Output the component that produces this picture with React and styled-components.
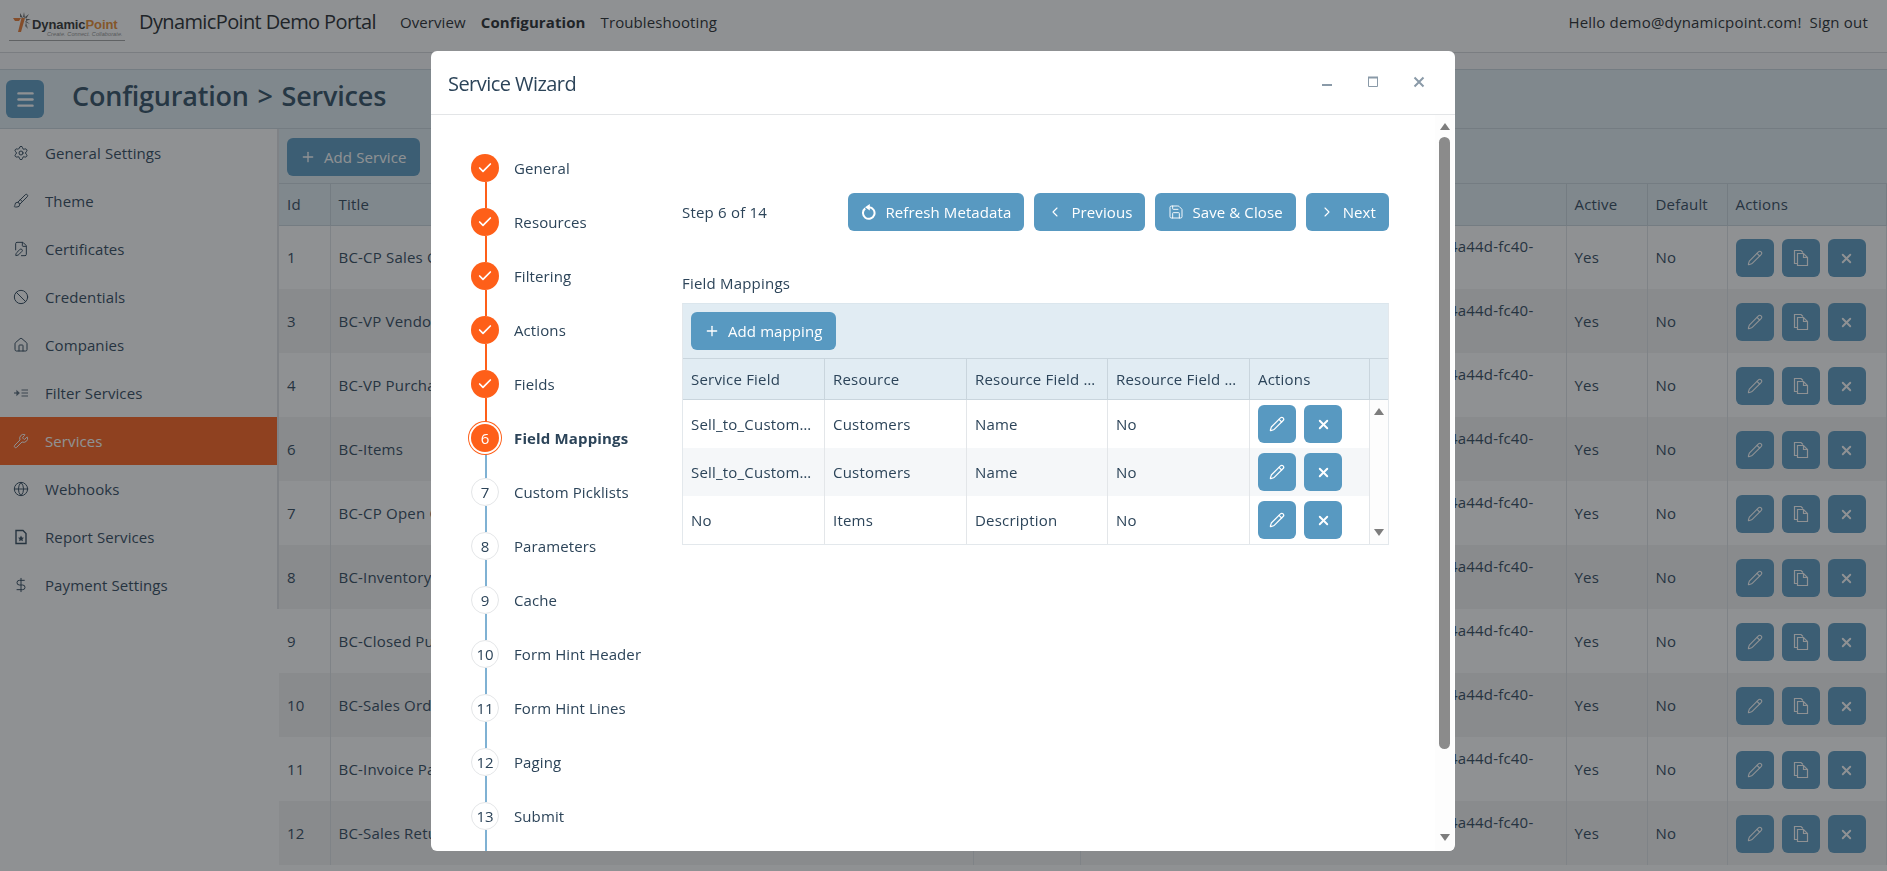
import React from 'react';
import styled, { createGlobalStyle } from 'styled-components';
import { Settings, Brush, FilePen, Ban, House, Wrench, Globe, DollarSign, Menu, Plus, Pencil, X, Check, ChevronLeft, ChevronRight, Save } from 'lucide-react';

const FONT = `"Open Sans", "Noto Sans", "Liberation Sans", sans-serif`;

const Global = createGlobalStyle`
  html, body { margin: 0; padding: 0; height: 100%; overflow: hidden; background: #fff; }
  * { box-sizing: border-box; }
  body { font-family: ${FONT}; font-size: 15px; color: #2c4459; letter-spacing: 0.2px; }
`;

const Page = styled.div`
  height: 871px;
  display: flex;
  flex-direction: column;
  overflow: hidden;
`;
const TopBar = styled.header`
  height: 53px;
  flex: none;
  display: flex;
  align-items: center;
  padding: 0 19px 9px 9px;
  border-bottom: 1px solid #d5d7da;
  color: #212529;
`;
const Logo = styled.div`
  width: 116px;
  flex: none;
  height: 29px;
  border-bottom: 1px solid #a0a0a0;
  display: flex;
  align-items: flex-start;
  margin-top: 9px;
  padding-left: 3px;
  overflow: hidden;
  svg { flex: none; }
`;
const LogoWords = styled.div`
  display: flex;
  flex-direction: column;
  padding-top: 6px;
`;
const LogoName = styled.span`
  font: 700 13px/13px "Liberation Sans", sans-serif;
  letter-spacing: -0.1px;
  color: #2d2d2d;
  white-space: nowrap;
`;
const LogoAccent = styled.span`
  color: #e8892c;
`;
const LogoTag = styled.span`
  font: italic 400 5.5px/7px "Liberation Sans", sans-serif;
  letter-spacing: 0.1px;
  color: #8c8c8c;
  padding-left: 15px;
  white-space: nowrap;
`;
const Brand = styled.span`
  font-size: 20px;
  letter-spacing: -0.62px;
  margin-left: 14px;
  white-space: nowrap;
`;
const Nav = styled.nav`
  display: flex;
  gap: 15px;
  margin-left: 24px;
`;
const NavLink = styled.a`
  font-weight: ${p => (p.$active ? 700 : 400)};
  letter-spacing: 0.1px;
  white-space: nowrap;
`;
const Greeting = styled.div`
  margin-left: auto;
  display: flex;
  gap: 8px;
  white-space: nowrap;
`;
const Band = styled.div`
  height: 17px;
  flex: none;
  background: #f8f9fa;
  border-bottom: 1px solid #c9d5dd;
`;
const TitleBar = styled.div`
  height: 59px;
  flex: none;
  display: flex;
  align-items: center;
  padding-left: 6px;
  background: #e1ecf3;
  border-bottom: 1px solid #c9d5dd;
`;
const Hamburger = styled.button`
  width: 38px;
  height: 38px;
  border: 0;
  border-radius: 6px;
  background: #5899c1;
  color: #fff;
  display: flex;
  align-items: center;
  justify-content: center;
  padding: 0;
`;
const PageTitle = styled.h1`
  margin: 0 0 7px 28px;
  font-size: 27px;
  font-weight: 600;
  letter-spacing: -0.2px;
  word-spacing: 2px;
  color: #2c4a60;
  white-space: pre;
`;
const Body = styled.div`
  flex: 1;
  display: flex;
  min-height: 0;
`;
const Sidebar = styled.aside`
  width: 279px;
  flex: none;
  height: 480px;
  border-right: 2px solid #dfe1e4;
`;
const SideItem = styled.div`
  height: 48px;
  display: flex;
  align-items: center;
  gap: 16px;
  padding-left: 13px;
  letter-spacing: 0.1px;
  color: ${p => (p.$active ? '#fff' : '#2c4459')};
  background: ${p => (p.$active ? '#fe5f19' : 'transparent')};
`;
const Content = styled.main`
  flex: 1;
  min-width: 0;
`;
const Toolbar = styled.div`
  height: 55px;
  padding: 9px 8px 0;
  background: #e1ecf3;
  border-bottom: 1px solid #c9d5dd;
`;
const Btn = styled.button`
  height: 38px;
  display: inline-flex;
  align-items: center;
  gap: 8px;
  padding: 0 13px;
  border: 0;
  border-radius: 6px;
  background: #5899c1;
  color: #fff;
  font-family: inherit;
  font-size: 15px;
  letter-spacing: 0.1px;
  white-space: nowrap;
`;
const IconBtn = styled(Btn)`
  width: 38px;
  padding: 0;
  justify-content: center;
`;
const Grid = styled.table`
  width: 100%;
  table-layout: fixed;
  border-collapse: collapse;
`;
const Th = styled.th`
  height: 41px;
  padding: 0 8px;
  text-align: left;
  font-weight: 400;
  background: #e1ecf3;
  border-right: 1px solid #c9d5dd;
  border-bottom: 1px solid #c9d5dd;
  white-space: nowrap;
  overflow: hidden;
  text-overflow: ellipsis;
`;
const Tr = styled.tr`
  background: ${p => (p.$alt ? '#f2f2f3' : '#fff')};
`;
const Td = styled.td`
  height: 64px;
  padding: 0 8px;
  border-right: 1px solid #dfe3e7;
  line-height: 21px;
  white-space: nowrap;
`;
const ActionRow = styled.div`
  display: flex;
  gap: 8px;
  padding-top: 2px;
`;

const Overlay = styled.div`
  position: fixed;
  inset: 0;
  background: rgba(32, 35, 39, 0.5);
`;
const Modal = styled.section`
  position: fixed;
  left: 431px;
  top: 51px;
  width: 1024px;
  height: 800px;
  background: #fff;
  border-radius: 6px;
  display: flex;
  flex-direction: column;
  overflow: hidden;
`;
const ModalHead = styled.div`
  height: 64px;
  flex: none;
  display: flex;
  align-items: center;
  padding: 0 29px 0 17px;
  border-bottom: 1px solid #e3e5e7;
`;
const ModalTitle = styled.h2`
  margin: 2px 0 0;
  font-size: 20px;
  font-weight: 400;
  letter-spacing: -0.55px;
  flex: 1;
`;
const WinControls = styled.div`
  display: flex;
  gap: 32px;
  margin-top: -1px;
  color: #8a9aa8;
`;
const ModalBody = styled.div`
  flex: 1;
  min-height: 0;
  display: flex;
  overflow: hidden;
`;
const Stepper = styled.ol`
  list-style: none;
  margin: 0;
  padding: 39px 0 0 40px;
  width: 251px;
  flex: none;
`;
const Step = styled.li`
  display: grid;
  grid-template-columns: 28px 1fr;
  column-gap: 15px;
`;
const Rail = styled.div`
  display: flex;
  flex-direction: column;
`;
const Dot = styled.div`
  width: 28px;
  height: 28px;
  border-radius: 50%;
  display: flex;
  align-items: center;
  justify-content: center;
  flex: none;
  position: relative;
  letter-spacing: 0;
  background: ${p => (p.$state === 'todo' ? '#fff' : '#fe5f19')};
  color: ${p => (p.$state === 'todo' ? '#2c4459' : '#fff')};
  border: ${p => (p.$state === 'todo' ? '1px solid #e4e6e8' : '0')};
  box-shadow: ${p => (p.$state === 'current' ? '0 0 0 2px #fff, 0 0 0 3px #fe5f19' : 'none')};
  z-index: 1;
`;
const Connector = styled.div`
  width: 2px;
  height: 26px;
  margin-left: 14px;
  background: ${p => (p.$done ? '#fe5f19' : '#7fb1d3')};
`;
const StepLabel = styled.div`
  height: 28px;
  line-height: 28px;
  white-space: nowrap;
  font-weight: ${p => (p.$current ? 700 : 400)};
  letter-spacing: ${p => (p.$current ? '0.15px' : '0.1px')};
`;
const Main = styled.div`
  width: 707px;
  flex: none;
  padding-top: 78px;
`;
const ActionsBar = styled.div`
  display: flex;
  align-items: center;
  gap: 10px;
`;
const StepCount = styled.div`
  flex: 1;
`;
const SectionLabel = styled.div`
  margin-top: 42px;
  height: 20px;
  line-height: 21px;
`;
const MapGrid = styled.div`
  margin-top: 10px;
  border: 1px solid #e3e8ec;
  border-top-color: #dbe6ed;
`;
const MapToolbar = styled.div`
  height: 55px;
  padding: 8px;
  background: #e1ecf3;
  border-bottom: 1px solid #c9d5dd;
`;
const MapRowHead = styled.div`
  display: grid;
  grid-template-columns: 142px 142px 141px 142px 120px 1fr;
  height: 41px;
  background: #e1ecf3;
  border-bottom: 1px solid #c9d5dd;
`;
const MapTh = styled.div`
  padding: 0 8px;
  line-height: 41px;
  border-right: ${p => (p.$last ? '0' : '1px solid #c9d5dd')};
  white-space: nowrap;
  overflow: hidden;
  text-overflow: ellipsis;
`;
const MapBody = styled.div`
  display: flex;
`;
const MapRows = styled.div`
  width: 687px;
  flex: none;
`;
const MapRow = styled.div`
  display: grid;
  grid-template-columns: 142px 142px 141px 142px 120px;
  height: 48px;
  background: ${p => (p.$alt ? '#f5f7f9' : '#fff')};
`;
const MapTd = styled.div`
  padding: 0 8px;
  display: flex;
  align-items: center;
  gap: 8px;
  border-right: 1px solid #e3e6e9;
  white-space: nowrap;
  overflow: hidden;
`;
const MapTdText = styled.span`
  overflow: hidden;
  text-overflow: ellipsis;
`;
const MiniTrack = styled.div`
  flex: 1;
  background: #fdfdfd;
  display: flex;
  flex-direction: column;
  justify-content: space-between;
  align-items: center;
  padding: 8px 0;
`;
const Track = styled.div`
  width: 19px;
  margin-left: 46px;
  flex: none;
  background: #fdfdfd;
  display: flex;
  flex-direction: column;
  align-items: center;
  padding: 8px 0 10px;
`;
const Thumb = styled.div`
  width: 11px;
  height: 612px;
  margin-top: 7px;
  border-radius: 6px;
  background: #8b8b8b;
`;
const Spacer = styled.div`
  flex: 1;
`;
const Arrow = styled.span`
  width: 0;
  height: 0;
  border-left: 5px solid transparent;
  border-right: 5px solid transparent;
  ${p => (p.$down ? 'border-top: 7px solid #7d7d7d;' : 'border-bottom: 7px solid #7d7d7d;')}
`;

const Icon = { size: 16, strokeWidth: 1.5 };

const FilterIcon = () => (
  <svg width="16" height="16" viewBox="0 0 16 16" fill="none" stroke="currentColor" strokeWidth="1.2" opacity="0.8">
    <path d="M1 8h4" /><path d="M4 6.2L6 8l-2 1.8z" fill="currentColor" />
    <path d="M8.5 5H15M8.5 8H15M8.5 11H15" />
  </svg>
);
const ReportIcon = () => (
  <svg width="16" height="16" viewBox="0 0 16 16" fill="none" stroke="currentColor" strokeWidth="1.4">
    <path d="M3 1.5h7l3 3v10H3z" />
    <path d="M8 6.5l1 2 2 .2-1.5 1.4.4 2.1L8 11.2l-1.9 1 .4-2.1L5 8.7l2-.2z" fill="currentColor" stroke="none" />
  </svg>
);
const CopyIcon = () => (
  <svg width="16" height="18" viewBox="0 0 16 18" fill="none" stroke="currentColor" strokeWidth="1.2">
    <path d="M4.5 14.5H1.5V1.5H8L10 3.5" />
    <path d="M4.5 4.5H10.5L14.5 8.5V16.5H4.5Z" />
    <path d="M10.5 4.5V8.5H14.5" />
  </svg>
);
const ResetIcon = () => (
  <svg width="16" height="16" viewBox="0 0 16 16" fill="none">
    <path d="M4.2 4.4A5.8 5.8 0 1 0 8 3.2" stroke="currentColor" strokeWidth="2" />
    <path d="M8.8 0L4 3.2L8.8 6.4Z" fill="currentColor" />
  </svg>
);
const MinIcon = () => (
  <svg width="14" height="14" viewBox="0 0 14 14"><path d="M2 10h10" stroke="currentColor" strokeWidth="2" /></svg>
);
const MaxIcon = () => (
  <svg width="14" height="14" viewBox="0 0 14 14" fill="none" stroke="currentColor">
    <path d="M2.5 2.5h9v9h-9z" /><path d="M2 2.5h10" strokeWidth="2" />
  </svg>
);
const CloseIcon = () => (
  <svg width="14" height="14" viewBox="0 0 14 14" fill="none" stroke="currentColor" strokeWidth="2"><path d="M2.5 2.5l9 9M11.5 2.5l-9 9" /></svg>
);
const LogoMark = () => (
  <svg width="20" height="24" viewBox="0 0 20 24" fill="none">
    <path d="M1 6h8l-2 3H3z" fill="#e8772c" />
    <path d="M9.5 6h3.5l-4 14H6z" fill="#e8772c" />
    <path d="M8 1l3 5-3-1zM12 0l1 6-2-1zM17 2l-3 5-1-2zM19 7l-5 2 0-2zM18 12l-5-2 1-1z" fill="#666" />
    <path d="M14 10l2 7-3-3z" fill="#888" />
  </svg>
);

const sidebar = [
  ['General Settings', <Settings {...Icon} />],
  ['Theme', <Brush {...Icon} />],
  ['Certificates', <FilePen {...Icon} />],
  ['Credentials', <Ban {...Icon} />],
  ['Companies', <House {...Icon} />],
  ['Filter Services', <FilterIcon />],
  ['Services', <Wrench {...Icon} />, true],
  ['Webhooks', <Globe {...Icon} />],
  ['Report Services', <ReportIcon />],
  ['Payment Settings', <DollarSign {...Icon} />],
];

const services = [
  ['1', 'BC-CP Sales Orders'],
  ['3', 'BC-VP Vendors'],
  ['4', 'BC-VP Purchase Orders'],
  ['6', 'BC-Items'],
  ['7', 'BC-CP Open Orders'],
  ['8', 'BC-Inventory'],
  ['9', 'BC-Closed Purchase Orders'],
  ['10', 'BC-Sales Orders'],
  ['11', 'BC-Invoice Payments'],
  ['12', 'BC-Sales Returns'],
];

const steps = ['General', 'Resources', 'Filtering', 'Actions', 'Fields', 'Field Mappings', 'Custom Picklists', 'Parameters', 'Cache', 'Form Hint Header', 'Form Hint Lines', 'Paging', 'Submit'];

const mappings = [
  ['Sell_to_Customer_Name', 'Customers', 'Name', 'No'],
  ['Sell_to_Customer_Name_2', 'Customers', 'Name', 'No'],
  ['No', 'Items', 'Description', 'No'],
];

export default function App() {
  return (
    <>
      <Global />
      <Page>
        <TopBar>
          <Logo>
            <LogoMark />
            <LogoWords>
              <LogoName>Dynamic<LogoAccent>Point</LogoAccent></LogoName>
              <LogoTag>Create. Connect. Collaborate.</LogoTag>
            </LogoWords>
          </Logo>
          <Brand>DynamicPoint Demo Portal</Brand>
          <Nav>
            <NavLink>Overview</NavLink>
            <NavLink $active>Configuration</NavLink>
            <NavLink>Troubleshooting</NavLink>
          </Nav>
          <Greeting>
            <span>Hello demo@dynamicpoint.com!</span>
            <span>Sign out</span>
          </Greeting>
        </TopBar>
        <Band />
        <TitleBar>
          <Hamburger><Menu size={21} strokeWidth={2.8} /></Hamburger>
          <PageTitle>Configuration &gt; Services</PageTitle>
        </TitleBar>
        <Body>
          <Sidebar>
            {sidebar.map(([label, icon, active]) => (
              <SideItem key={label} $active={active}>{icon}<span>{label}</span></SideItem>
            ))}
          </Sidebar>
          <Content>
            <Toolbar>
              <Btn><Plus size={16} strokeWidth={2} />Add Service</Btn>
            </Toolbar>
            <Grid>
              <colgroup>
                <col width="51" /><col width="643" /><col width="107" /><col width="486" /><col width="81" /><col width="80" /><col />
              </colgroup>
              <thead>
                <tr>
                  {['Id', 'Title', 'Type', 'Url', 'Active', 'Default', 'Actions'].map(h => <Th key={h}>{h}</Th>)}
                </tr>
              </thead>
              <tbody>
                {services.map(([id, title], i) => (
                  <Tr key={id} $alt={i % 2 === 1}>
                    <Td>{id}</Td>
                    <Td>{title}</Td>
                    <Td>Business<br />Central</Td>
                    <Td>https://api.businesscentral.dynamics.com/v2.0/c0f4a44d-fc40-<br />4a6c-9ab7-6dcd0c5ca1b2/Production/ODataV4</Td>
                    <Td>Yes</Td>
                    <Td>No</Td>
                    <Td>
                      <ActionRow>
                        <IconBtn><Pencil size={16} strokeWidth={1.6} /></IconBtn>
                        <IconBtn><CopyIcon /></IconBtn>
                        <IconBtn><X size={15} strokeWidth={3} /></IconBtn>
                      </ActionRow>
                    </Td>
                  </Tr>
                ))}
              </tbody>
            </Grid>
          </Content>
        </Body>
      </Page>
      <Overlay />
      <Modal>
        <ModalHead>
          <ModalTitle>Service Wizard</ModalTitle>
          <WinControls><MinIcon /><MaxIcon /><CloseIcon /></WinControls>
        </ModalHead>
        <ModalBody>
          <Stepper>
            {steps.map((s, i) => {
              const state = i < 5 ? 'done' : i === 5 ? 'current' : 'todo';
              return (
                <Step key={s}>
                  <Rail>
                    <Dot $state={state}>{state === 'done' ? <Check size={16} strokeWidth={2.6} /> : i + 1}</Dot>
                    <Connector $done={i < 5} />
                  </Rail>
                  <StepLabel $current={i === 5}>{s}</StepLabel>
                </Step>
              );
            })}
          </Stepper>
          <Main>
            <ActionsBar>
              <StepCount>Step 6 of 14</StepCount>
              <Btn><ResetIcon />Refresh Metadata</Btn>
              <Btn><ChevronLeft size={16} strokeWidth={1.6} />Previous</Btn>
              <Btn><Save size={16} strokeWidth={1.4} />Save &amp; Close</Btn>
              <Btn><ChevronRight size={16} strokeWidth={1.6} />Next</Btn>
            </ActionsBar>
            <SectionLabel>Field Mappings</SectionLabel>
            <MapGrid>
              <MapToolbar>
                <Btn><Plus size={16} strokeWidth={2} />Add mapping</Btn>
              </MapToolbar>
              <MapRowHead>
                <MapTh>Service Field</MapTh>
                <MapTh>Resource</MapTh>
                <MapTh>Resource Field Name</MapTh>
                <MapTh>Resource Field Required</MapTh>
                <MapTh>Actions</MapTh>
                <MapTh $last />
              </MapRowHead>
              <MapBody>
                <MapRows>
                  {mappings.map((m, i) => (
                    <MapRow key={i} $alt={i === 1}>
                      {m.map((c, j) => <MapTd key={j}><MapTdText>{c}</MapTdText></MapTd>)}
                      <MapTd>
                        <IconBtn><Pencil size={16} strokeWidth={1.8} /></IconBtn>
                        <IconBtn><X size={15} strokeWidth={3} /></IconBtn>
                      </MapTd>
                    </MapRow>
                  ))}
                </MapRows>
                <MiniTrack><Arrow /><Arrow $down /></MiniTrack>
              </MapBody>
            </MapGrid>
          </Main>
          <Track>
            <Arrow />
            <Thumb />
            <Spacer />
            <Arrow $down />
          </Track>
        </ModalBody>
      </Modal>
    </>
  );
}
